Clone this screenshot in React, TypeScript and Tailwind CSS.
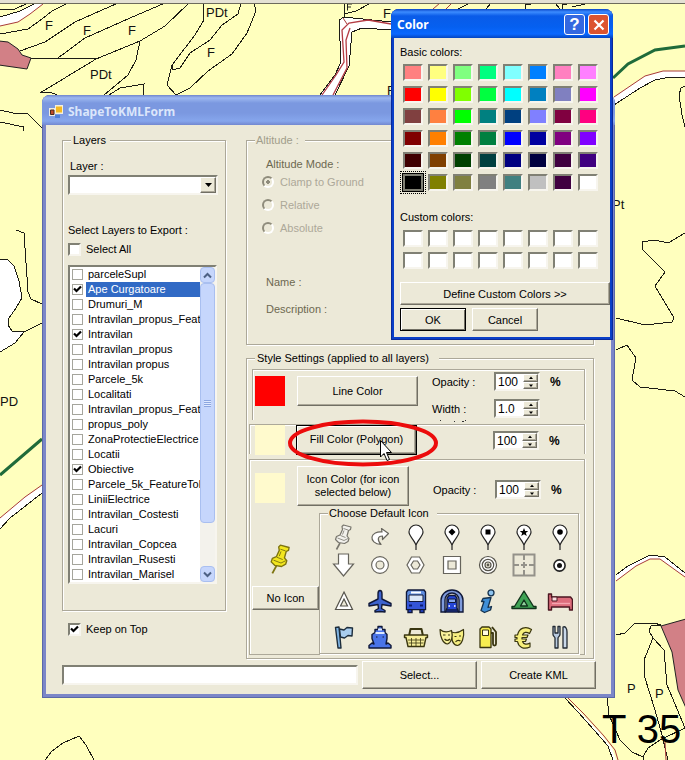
import React, { useState } from "react";
import type { ReactNode } from "react";

const RAISED =
  "bg-[#ece9d8] border border-t-white border-l-white border-r-[#716f64] border-b-[#716f64] shadow-[inset_-1px_-1px_0_#aca899]";
const SUNKEN =
  "bg-white border-2 border-t-[#808074] border-l-[#808074] border-r-[#f7f5ee] border-b-[#f7f5ee]";
const ETCHED = "border border-[#aca899] shadow-[1px_1px_0_#fff,inset_1px_1px_0_#fff]";

function MapLabel({ x, y, children }: { x: number; y: number; children: string }) {
  return (
    <text x={x} y={y} fontSize="13" fill="#111">
      {children}
    </text>
  );
}

function MapCanvas() {
  return (
    <svg
      className="absolute inset-0 h-full w-full font-['Liberation_Sans',sans-serif]"
      viewBox="0 0 685 760"
      preserveAspectRatio="xMinYMin slice"
      aria-hidden="true"
    >
      <rect width="685" height="760" fill="#ffffbe" />
      <g fill="#fff">
        <path d="M0 17 20 11 34 4H43L30 14 18 22 0 26Z" />
        <path d="M320 95 335 75 341 62 339 20 344 17 391 22V30L362 28 352 32 349 66 335 95Z" />
        <path d="M0 259 8 260 14 266 19 281 22 298 16 308 9 318 8 325 12 331 24 332 15 343 0 352Z" />
        <path d="M0 518 25 497 42 486V493L10 518 0 529Z" />
        <path d="M614 97 645 76 663 71H685V77H670L655 80 640 88 614 105Z" />
        <path d="M616 575 628 566 650 555 665 557 685 573V577L660 559H650L636 566 616 581Z" />
        <path d="M564 697 580 712 600 733 612 748 616 760H613L608 746 594 730 578 712Z" />
      </g>
      <g fill="#d28086" stroke="#222" strokeWidth="1">
        <path d="M-1 41 8 42 18 49 22 55 31 58 27 69-1 65Z" />
        <path d="M661 626 686 619V708L678 690 672 652Z" />
      </g>
      <g fill="none" stroke="#1c1c14" strokeWidth="1" shapeRendering="crispEdges">
        <path d="M0 10 15 9 28 3M0 17 20 11 34 4M0 34 28 29 42 19 52 11 68 3M20 51 45 42 75 22 118 3M58 58 85 38 130 18 165 3" />
        <path d="M40 93 96 59 140 41 165 26 189 3M30 58 96 59M140 41 136 60 128 75 110 90 104 95M40 93 50 92 57 95M109 95 120 88 144 84 143 95" />
        <path d="M203 3 204 20 195 35 172 65V70L180 68 190 53 210 40 222 25 238 14 241 3M172 65 167 85 176 95 190 88 208 71 232 54 247 33 256 11 254 3" />
        <path d="M320 95 335 75 341 62 339 20 344 17 391 22M391 30 362 28 352 32 349 66 335 95M344 17 345 3M344 14 356 11 371 3" />
        <path d="M0 110 13 113 28 114 42 128M0 122 24 127 23 131" />
        <path d="M16 230 24 233 28 292 31 299 42 304M0 259 8 260 14 266 19 281 22 298 16 308 9 318 8 325 12 331 24 332 42 323M24 332 15 343 0 352M0 529 10 518 42 493" />
        <path d="M45 760 52 751 63 743 79 736 86 745 94 760" />
        <path d="M614 105 640 88 655 80 670 77H685M685 86 681 88 679 95 682 115 685 127M458 9 470 3M486 9 491 3M555 3 560 9M572 7 585 4M525 4H531M525 4V9M562 4H567M562 4V9" />
        <path d="M685 233 668 243 655 240 642 242 643 250 665 272 655 286 674 318 672 322 645 325 616 318" />
        <path d="M616 350 627 345 636 358 632 380 640 387 675 391 685 397M616 575 628 566 650 555 665 557 685 573" />
        <path d="M616 635 625 633 634 624 654 623 661 625 651 626 649 631 653 638 644 660V675L655 710 662 735 668 760M653 638 664 650 667 685 685 728" />
        <path d="M607 697 609 715 620 740 632 752 643 757 648 748 660 740 685 728M564 697 578 712 594 730 608 746 613 760M643 757V760" />
      </g>
      <g fill="none" stroke="#a83a38" strokeWidth="1">
        <path d="M0 26 18 22 30 14 43 4M0 518 25 497 42 485M614 97 645 76 663 71H685M616 581 636 566 650 559H660L685 577M567 697 584 714 604 736 615 750 618 760M665 742 666 760" />
        <path d="M343 18 347 24M433 9 440 3M446 9 452 3" />
      </g>
      <g fill="none" stroke="#b43c44" strokeWidth="1.300">
        <path d="M322 95 336 75 344 62 342 30 349 23 368 20 391 24M333 95 347 68 346 40 350 28" />
      </g>
      <path d="M0 475 42 439M613 78 628 64 655 50 685 46" fill="none" stroke="#1f6b3a" strokeWidth="3" />
      <MapLabel x={45} y={30}>F</MapLabel>
      <MapLabel x={83} y={35}>F</MapLabel>
      <MapLabel x={128} y={35}>F</MapLabel>
      <MapLabel x={207} y={57}>F</MapLabel>
      <MapLabel x={90} y={79}>PDt</MapLabel>
      <MapLabel x={206} y={17}>PDt</MapLabel>
      <MapLabel x={383} y={18}>F</MapLabel>
      <MapLabel x={387} y={95}>F</MapLabel>
      <MapLabel x={0} y={406}>PD</MapLabel>
      <MapLabel x={612} y={209}>Pt</MapLabel>
      <MapLabel x={627} y={693}>P</MapLabel>
      <MapLabel x={655} y={698}>P</MapLabel>
      <text x="602" y="743" fontSize="40" fill="#000">T 35</text>
      <path d="M347.500 10.500V4H352M347.500 7H351" fill="none" stroke="#222" />
      <rect width="685" height="3" fill="#e4e1d4" />
      <rect y="3" width="685" height="1" fill="#6d6b5c" />
    </svg>
  );
}

function Tick() {
  return (
    <svg viewBox="0 0 9 9" className="pointer-events-none z-10 col-start-1 row-start-1 size-[9px]" aria-hidden="true">
      <path d="M1 3.5 3.5 6 8 1.5" fill="none" stroke="#000" strokeWidth="2.2" />
    </svg>
  );
}

function CheckBox({ label, start = false, flat = false }: { label: string; start?: boolean; flat?: boolean }) {
  const [on, setOn] = useState(start);
  return (
    <label className={flat ? "flex h-[15px] items-center" : "flex h-4 items-center gap-[5px]"}>
      <span className={flat ? "mr-[3px] ml-0.5 grid place-items-center" : "grid place-items-center"}>
        <input
          type="checkbox"
          checked={on}
          onChange={() => setOn(!on)}
          className={
            flat
              ? "col-start-1 row-start-1 size-[11px] appearance-none border border-[#a5a59c] bg-white"
              : "col-start-1 row-start-1 size-[13px] appearance-none border-2 border-t-[#808074] border-l-[#808074] border-r-[#f7f5ee] border-b-[#f7f5ee] bg-white"
          }
        />
        {on && <Tick />}
      </span>
      <span
        className={
          label === "Ape Curgatoare"
            ? "h-[15px] flex-1 bg-[#316ac5] pl-[2px] leading-[15px] whitespace-nowrap text-white"
            : flat
              ? "h-[15px] flex-1 pl-[2px] leading-[15px] whitespace-nowrap"
              : "leading-4"
        }
      >
        {label}
      </span>
    </label>
  );
}

function Group({ title, className, titleClass, children }: { title: string; className: string; titleClass: string; children: ReactNode }) {
  return (
    <fieldset className={`${ETCHED} ${className}`}>
      <legend className={`bg-[#ece9d8] leading-[14px] ${titleClass}`}>{title}</legend>
      {children}
    </fieldset>
  );
}

const LAYERS: [string, boolean][] = [
  ["parceleSupl", false],
  ["Ape Curgatoare", true],
  ["Drumuri_M", false],
  ["Intravilan_propus_Featu", false],
  ["Intravilan", true],
  ["Intravilan_propus", false],
  ["Intravilan propus", false],
  ["Parcele_5k", false],
  ["Localitati", false],
  ["Intravilan_propus_Featu", false],
  ["propus_poly", false],
  ["ZonaProtectieElectrice", false],
  ["Locatii", false],
  ["Obiective", true],
  ["Parcele_5k_FeatureTol", false],
  ["LiniiElectrice", false],
  ["Intravilan_Costesti", false],
  ["Lacuri", false],
  ["Intravilan_Copcea", false],
  ["Intravilan_Rusesti", false],
  ["Intravilan_Marisel", false],
];

function ScrollButton({ up }: { up: boolean }) {
  return (
    <button
      type="button"
      aria-label={up ? "Scroll up" : "Scroll down"}
      className="grid h-4 w-[15px] place-items-center rounded-sm border border-[#a9bff0] bg-[#c6d6fc]"
    >
      <svg viewBox="0 0 9 7" className="h-[7px] w-[9px]" aria-hidden="true">
        <path d={up ? "M1 5.5 4.5 2 8 5.5" : "M1 1.5 4.5 5 8 1.5"} fill="none" stroke="#4d6185" strokeWidth="2" />
      </svg>
    </button>
  );
}

function LayerList() {
  return (
    <div className={`mt-2 flex w-[149px] justify-between ${SUNKEN}`}>
      <div className="w-[130px] overflow-hidden">
        {LAYERS.map(([name, on], i) => (
          <CheckBox key={i} label={name} start={on} flat />
        ))}
      </div>
      <div className="flex flex-col bg-[#f3f2ec]">
        <ScrollButton up />
        <div className="grid h-[240px] place-items-center rounded-sm border border-[#a9bff0] bg-[#c6d6fc]">
          <span className="h-[7px] w-[7px] bg-[repeating-linear-gradient(#8ca6e0_0_1px,#dfe9ff_1px_2px)]" />
        </div>
        <div className="flex-1" />
        <ScrollButton up={false} />
      </div>
    </div>
  );
}

function Spinner({ label, value }: { label: string; value: string }) {
  return (
    <span className={`flex h-[19px] w-[46px] ${SUNKEN}`}>
      <input aria-label={label} defaultValue={value} className="w-full min-w-0 flex-1 pl-0.5 text-[12px] outline-none" />
      <span className="flex w-[15px] flex-none flex-col">
        {["M0 3 2 0.5 4 3Z", "M0 0.5 2 3 4 0.5Z"].map((d, i) => (
          <button
            key={i}
            type="button"
            aria-label={i === 0 ? `Increase ${label}` : `Decrease ${label}`}
            className={`grid flex-1 place-items-center ${RAISED}`}
          >
            <svg viewBox="0 0 4 3" className="h-[3px] w-1" aria-hidden="true">
              <path d={d} />
            </svg>
          </button>
        ))}
      </span>
    </span>
  );
}

function Percent() {
  return <span className="pl-2.5 text-[12px] font-bold">%</span>;
}

/* ---- placemark icons, each drawn on a 26 x 26 grid ---- */

function PinShape({ fill, edge }: { fill: string; edge: string }) {
  return (
    <g stroke={edge} strokeLinejoin="round">
      <path d="M9 19 5.500 25.500" strokeWidth="1.600" />
      <path d="M11 2.500 12.500 1 20 3 19.500 5.500 17.500 6.500 16 12 18 14.500 17 17.500 13.500 19.500 7.500 18.500 4.500 15.500 5.500 12.500 9 11 11.500 5.500Z" fill={fill} strokeWidth="1.200" />
      <path d="M12.500 4.500 17 6M9.500 11.500 14.500 13.500M6.500 14 13 16.500 17 14.500M13 6.500 11.500 10.500" fill="none" strokeWidth="0.800" />
    </g>
  );
}

function Balloon({ children }: { children?: ReactNode }) {
  return (
    <>
      <path d="M13 26V21.500C12.500 17 6 12.500 6 8a7 7 0 0 1 14 0C20 12.500 13.500 17 13 21.500" fill="#fff" stroke="#222" strokeWidth="1.200" />
      {children}
    </>
  );
}

const ICONS: [string, ReactNode][] = [
  ["White pushpin", <PinShape fill="#f2f1ec" edge="#77756c" />],
  [
    "Turn arrow",
    <path d="M14.500 4.500 21.500 9.500 15.500 15.500 15.500 12C10.500 12 10 16 14 20.500 7.500 20 4.500 16.500 5 13 5.500 9.500 10 7.500 15 8Z" fill="#fff" stroke="#66645c" strokeWidth="1.200" strokeLinejoin="round" />,
  ],
  ["Blank balloon", <Balloon />],
  ["Diamond balloon", <Balloon><path d="M13 4.500 16.500 8 13 11.500 9.500 8Z" /></Balloon>],
  ["Square balloon", <Balloon><path d="M10.500 5.500h5v5h-5z" /></Balloon>],
  ["Star balloon", <Balloon><path d="M13 4 14.200 7 17.200 7 14.800 9 15.800 12 13 10.200 10.200 12 11.200 9 8.800 7 11.800 7Z" /></Balloon>],
  ["Dot balloon", <Balloon><circle cx="13" cy="8" r="2.800" /></Balloon>],
  ["Down arrow", <path d="M7.500 2h10v10h5L12.500 24 2.500 12h5Z" fill="#fff" stroke="#66645c" strokeWidth="1.200" />],
  [
    "Circle",
    <g fill="none"><circle cx="13" cy="13" r="6.200" stroke="#66645c" strokeWidth="5.500" /><circle cx="13" cy="13" r="6.200" stroke="#fff" strokeWidth="3.300" /></g>,
  ],
  [
    "Polygon",
    <g fill="#fff" stroke="#66645c" strokeWidth="1.200"><path d="M8.500 5h8l4.500 8-4.500 8h-8L4 13Z" /><path d="M10.500 9h4l2.500 4-2.500 4h-4L8 13Z" fill="#ece9d8" /></g>,
  ],
  [
    "Square",
    <g fill="#fff" stroke="#66645c" strokeWidth="1.200"><path d="M4.500 4.500h17v17h-17z" /><path d="M9 9h8v8H9z" fill="#ece9d8" /></g>,
  ],
  [
    "Target",
    <g fill="#fff" stroke="#55534b" strokeWidth="1.200"><circle cx="13" cy="13" r="8.500" /><circle cx="13" cy="13" r="5.700" /><circle cx="13" cy="13" r="3" fill="#ece9d8" /><circle cx="13" cy="13" r="0.800" /></g>,
  ],
  [
    "Cross hairs",
    <g fill="none" stroke="#94928a" strokeWidth="2"><path d="M2.500 2.500h21v21h-21z" /><path d="M13 3v5M13 18v5M3 13h5M18 13h5M13 10v6M10 13h6" /></g>,
  ],
  [
    "Shaded dot",
    <g><circle cx="12.500" cy="13.500" r="5.600" fill="#fff" stroke="#222" strokeWidth="1.600" /><circle cx="12.500" cy="13.500" r="2.500" fill="#111" /></g>,
  ],
  [
    "Triangle",
    <g fill="#fff" stroke="#55534b" strokeWidth="1.200"><path d="M13 4 21.500 21.500H4.500Z" /><path d="M13 11 16.500 18H9.500Z" fill="#ece9d8" /></g>,
  ],
  [
    "Airport",
    <path d="M13 2.500c1.500 0 2 1.500 2 3.500v5l9 4.500v2.500l-9-1.500-.5 4 3.500 2v1.500L13 23.500 8 24v-1.500l3.500-2-.5-4-9 1.500v-2.500L11 11V6c0-2 .5-3.500 2-3.500Z" fill="#3d63cf" stroke="#101838" strokeWidth="1.400" strokeLinejoin="round" />,
  ],
  [
    "Bus",
    <g stroke="#101838" strokeWidth="1.400">
      <path d="M5 21h4v3.500H5zM17 21h4v3.500h-4z" fill="#2546d8" />
      <path d="M5 2h16l1.500 2v17.500h-19V4Z" fill="#5f8de0" />
      <path d="M4 13h18v8H4z" fill="#3455d8" stroke="none" />
      <path d="M6 7h14v6.500H6z" fill="#dce8f8" strokeWidth="1" />
      <path d="M8 4.500h10" stroke="#fff" strokeWidth="2" />
      <path d="M6 17.500h3M17 17.500h3" stroke="#0c1c70" strokeWidth="2" />
    </g>,
  ],
  [
    "Rail",
    <g stroke="#101838" strokeWidth="1.400">
      <path d="M2 24V12a11 10 0 0 1 22 0v12h-4V12a7 7 0 0 0-14 0v12Z" fill="#7f9bdc" />
      <path d="M8 20V10l2-2.500h6l2 2.500v10l1.500 4h-13Z" fill="#2546d8" />
      <path d="M9.500 11h7v3.500h-7z" fill="#86a6ee" strokeWidth="1" />
      <path d="M9.500 18h1.500M15 18h1.500" stroke="#fff" strokeWidth="1.500" />
      <path d="M8 22h10" />
    </g>,
  ],
  [
    "Information",
    <g fill="#3f8fd8" stroke="#14304c" strokeWidth="1.300" strokeLinejoin="round">
      <circle cx="16" cy="4.800" r="3" fill="#8ec4f0" />
      <path d="M8 10.500 16 9.500 13 19.500 16.500 18.500 15.500 22 9.500 24.500 6 22.500 9 13.500 6.500 13.500Z" />
    </g>,
  ],
  [
    "Campground",
    <g stroke="#11331b" strokeWidth="1.400" strokeLinejoin="round">
      <path d="M13 3 22.500 18.500H25V20.500H1V18.500H3.500Z" fill="#3fa455" />
      <path d="M13 12 16.500 18H9.500Z" fill="#8fd09c" />
    </g>,
  ],
  [
    "Lodging",
    <g stroke="#4a1620" strokeWidth="1.400" strokeLinejoin="round">
      <path d="M1.500 6h3v3h19l2 2.500V22h-3v-3H4.500v3h-3Z" fill="#dd6d7c" />
      <path d="M5 9h5v4H5z" fill="#fbdde0" strokeWidth="1" />
      <path d="M5 15.500h18" stroke="#f4a6b0" />
    </g>,
  ],
  [
    "Flag",
    <g stroke="#1d2d3c" strokeWidth="1.400" strokeLinejoin="round">
      <path d="M4.500 3.500 8 3 10 24H7Z" fill="#7fb4e4" />
      <path d="M8.500 5 13 6 16 3.500 21.500 4 21 12 17 11.500 13.500 14 9.500 13Z" fill="#a9cdee" />
    </g>,
  ],
  [
    "Ferry",
    <g stroke="#101838" strokeWidth="1.400" strokeLinejoin="round">
      <path d="M8 8.500V5.500h3V2.500h4v3h3v3l2 2v4L19 20l2-1 3 2.500V24H2v-2.500L5 19l2 1-2-5.500v-4Z" fill="#4a74e8" />
      <path d="M11 5.500h4M8.500 9h9" stroke="#dce8ff" strokeWidth="2" />
      <path d="M9 13h1.500M15.500 13H17" strokeWidth="1.200" />
    </g>,
  ],
  [
    "Market basket",
    <g stroke="#3a3610" strokeWidth="1.400" strokeLinejoin="round">
      <path d="M6 12 7.500 5h11L20 12" fill="none" strokeWidth="2" />
      <path d="M1.500 11h23v2.500h-1.500L21 22.500H5L3 13.500H1.500Z" fill="#f6ee9a" />
      <path d="M5 16h16M5.500 19h15M8.500 14v8M13 14v8M17.500 14v8" strokeWidth="0.800" />
    </g>,
  ],
  [
    "Theatre masks",
    <g stroke="#3a3610" strokeWidth="1.200" strokeLinejoin="round">
      <path d="M12.500 8C16 9.500 21 8 24.500 5.500 25.500 13 23 20.500 18.500 21.500 14.500 21 12 17 12.500 8Z" fill="#f6ee80" />
      <path d="M1 5.500C4 8 8.500 8.500 12.500 6.500 14 12 13 18 8.500 20 4 19.500 1 13 1 5.500Z" fill="#f9f29c" />
      <path d="M4 11h2.500M9 11h2M5.500 15c2 2 4 1.500 5.500 0M15.500 12.500h2M20 12h2M16.500 18c1.500-2 3.500-2 5-1" fill="none" />
    </g>,
  ],
  [
    "Gas station",
    <g stroke="#3a3610" strokeWidth="1.300" strokeLinejoin="round">
      <path d="M15 9h3v11c0 2 3 2 3 0V8L17 3" fill="none" strokeWidth="1.800" />
      <path d="M5 5 7 3h7l2 2v18.500H5Z" fill="#f8ee50" />
      <path d="M7.500 6h6v5.500h-6z" fill="#fffde0" strokeWidth="1" />
    </g>,
  ],
  [
    "Euro",
    <path d="M20.500 5.500 18.500 9.500C15.500 7.500 12.500 8 11.500 11h5.500l-1 2.500h-5v1.500h4.500l-1 2.500h-3c1 3 4.500 3.500 7.500 1.500V23C12.500 26 7.500 23 6.500 17.500H4V15h2v-1.500H4V11h2.500C8 4 14.500 1.500 20.500 5.500Z" fill="#f8f07c" stroke="#3a3610" strokeWidth="1.200" strokeLinejoin="round" />,
  ],
  [
    "Dining",
    <g stroke="#222a33" strokeWidth="1.300" strokeLinejoin="round">
      <path d="M6 2.500v8c0 1.500 2 2.500 2 3.500v10h3V14c0-1 2-2 2-3.500v-8h-2V9H8V2.500Z" fill="#b9cbe0" />
      <path d="M16 24V3c2.500-1 4 1.500 4 5v16Z" fill="#c9d8ea" />
    </g>,
  ],
];

function Pushpin() {
  return (
    <svg viewBox="0 0 26 26" className="ml-[14px] size-[30px]" aria-hidden="true">
      <PinShape fill="#f2e61e" edge="#7d7410" />
    </svg>
  );
}

function IconPicker() {
  return (
    <Group title="Choose Default Icon" className="w-[260px] pb-[2px]" titleClass="ml-2 pr-2 pl-px">
      <div className="mt-[3px] grid grid-cols-7 grid-rows-[28px_28px_44px_28px] place-items-center pl-[6px]">
        {ICONS.map(([name, art]) => (
          <button key={name} type="button" aria-label={name} className="size-[26px]">
            <svg viewBox="0 0 26 26" className="size-[26px]" aria-hidden="true">
              {art}
            </svg>
          </button>
        ))}
      </div>
    </Group>
  );
}

function StyleSettings() {
  const band = "border-t border-r border-l border-[#aca899] shadow-[inset_1px_1px_0_#fff,1px_0_0_#fff]";
  return (
    <Group title="Style Settings (applied to all layers)" className="mt-[6px] pr-[8px] pb-[3px] pl-[2px]" titleClass="ml-1.5 px-0.5 pr-2.5">
      <div className={`mt-1 ml-[3px] flex h-[51px] pl-[2px] ${band}`}>
        <span className="mt-1.5 size-[30px] bg-[#ff0000]" />
        <button type="button" className={`mt-1.5 ml-3 h-[30px] w-[121px] ${RAISED}`}>Line Color</button>
        <div className="mt-0.5 ml-[14px] grid grid-cols-[62px_46px_auto] grid-rows-[19px_19px] items-center gap-y-2">
          <span>Opacity :</span>
          <Spinner label="Line opacity" value="100" />
          <Percent />
          <span>Width :</span>
          <Spinner label="Line width" value="1.0" />
        </div>
      </div>
      <div className={`relative mt-1 flex h-[30px] pl-[5px] ${band}`}>
        <span className="size-[30px] bg-[#fffacd]" />
        <button type="button" className="ml-[11px] h-[30px] w-[121px] border border-black bg-[#ece9d8] pb-0.5 shadow-[inset_1px_1px_0_#fff,inset_-1px_-1px_0_#716f64,inset_-2px_-2px_0_#aca899]">
          Fill Color (Polygon)
        </button>
        <span className="mt-1.5 ml-[76px] flex h-[19px] items-center">
          <Spinner label="Fill opacity" value="100" />
          <Percent />
        </span>
        <svg viewBox="0 0 180 48" className="pointer-events-none absolute -top-[6px] left-[38px] h-12 w-[180px]" aria-hidden="true">
          <ellipse cx="75" cy="24" rx="73" ry="21.500" fill="none" stroke="#ec0c0c" strokeWidth="4" />
          <path d="M92.500 21.500V38L96 34.500 99 41.500 101.500 40.500 98.500 33.500H103.500Z" fill="#fff" stroke="#000" />
          <path d="M152 1.500h1M166 2.500h1M174 2.500h2M177 1.500h1" stroke="#333" />
        </svg>
      </div>
      <div className={`mt-[5px] border-b pr-[4px] pl-[2px] ${band}`}>
        <div className="flex items-start pt-1.5 pl-[3px]">
          <span className="mt-[7px] size-[30px] bg-[#fffacd]" />
          <button type="button" className={`ml-3 h-10 w-[112px] px-2 leading-[13px] ${RAISED}`}>
            Icon Color (for icon selected below)
          </button>
          <span className="mt-3.5 ml-6 flex h-[19px] items-center">
            <span className="w-[62px]">Opacity :</span>
            <Spinner label="Icon opacity" value="100" />
            <Percent />
          </span>
        </div>
        <div className="flex">
          <div className="w-[67px] pt-[38px]">
            <Pushpin />
            <button type="button" className={`mt-3 h-6 w-full ${RAISED}`}>No Icon</button>
          </div>
          <IconPicker />
        </div>
      </div>
    </Group>
  );
}

function Altitude() {
  return (
    <Group title="Altitude :" className="pb-7 pl-[19px] text-[#6c6850]" titleClass="-ml-[11px] pr-1.5 pl-px text-[#a19d8b]">
      <div className="mt-2.5 leading-[14px]">Altitude Mode :</div>
      <div className="mt-1 -ml-1 flex flex-col gap-[9px] text-[#aca899]">
        {["Clamp to Ground", "Relative", "Absolute"].map((name, i) => (
          <label key={name} className="flex h-[14px] items-center gap-1.5">
            <input
              type="radio"
              name="altitude"
              disabled
              defaultChecked={i === 0}
              className="size-3 appearance-none rounded-full border-2 border-t-[#8f8c7c] border-l-[#8f8c7c] border-r-white border-b-white bg-[#ece9d8] checked:bg-[radial-gradient(#8f8c7c_2px,#ece9d8_2px)]"
            />
            <span>{name}</span>
          </label>
        ))}
      </div>
      <div className="mt-10 leading-[14px]">Name :</div>
      <div className="mt-[13px] leading-[14px]">Description :</div>
    </Group>
  );
}

function ExportForm() {
  return (
    <section className="absolute top-[95px] left-[42px] w-[573px] rounded-t-lg bg-[#7b86c8] shadow-[inset_1px_1px_0_#5a68a8,inset_-1px_-1px_0_#5a68a8]">
      <header className="flex h-[30px] items-center gap-[5px] rounded-t-lg bg-[linear-gradient(#6f86cc_0,#9db8f0_3px,#7b98e0_8px,#7b98e0_18px,#86a6ec_26px,#7288d0)] px-[7px] pt-1">
        <svg viewBox="0 0 14 14" className="size-[14px]" aria-hidden="true">
          <path d="M6 0h8v9H6z" fill="#f4f0dc" />
          <path d="M7 1.500h6v6H7z" fill="#f5b921" />
          <path d="M0 3h6v8H0z" fill="#f0ece0" />
          <path d="M1.500 5h3.500v4.500H1.500z" fill="#c04a28" stroke="#4b2c20" />
          <path d="M6 10h5v3H6z" fill="#4f7fd8" />
        </svg>
        <h1 className="font-['Noto_Sans','Open_Sans',sans-serif] text-[12px] font-bold text-[#dbe6fb]">ShapeToKMLForm</h1>
      </header>
      <div className="mx-1 bg-[#ece9d8] pt-2 pr-[17px] pb-[5px] pl-4">
        <div className="flex gap-5">
          <div className="w-[164px]">
            <Group title="Layers" className="pb-[26px] pl-[5px]" titleClass="ml-[3px] pr-1 pl-0.5">
              <label htmlFor="layer" className="mt-3 block pl-0.5 leading-[14px]">Layer :</label>
              <span className="mt-0.5 grid w-[150px]">
                <select id="layer" className={`col-start-1 row-start-1 h-5 appearance-none ${SUNKEN}`} />
                <span className={`pointer-events-none col-start-1 row-start-1 mt-0.5 mr-0.5 grid h-4 w-4 place-items-center justify-self-end ${RAISED}`}>
                  <svg viewBox="0 0 7 4" className="h-1 w-[7px]" aria-hidden="true">
                    <path d="M0 0h7L3.500 4Z" />
                  </svg>
                </span>
              </span>
              <div className="mt-7 mb-1 leading-[14px]">Select Layers to Export :</div>
              <CheckBox label="Select All" />
              <LayerList />
            </Group>
            <div className="mt-2.5 pl-1.5">
              <CheckBox label="Keep on Top" start />
            </div>
          </div>
          <div className="flex-1">
            <Altitude />
            <StyleSettings />
          </div>
        </div>
        <div className="mt-0.5 -mr-0.5 flex h-7 items-center gap-1">
          <input aria-label="Output file" className={`h-5 min-w-0 flex-1 px-1 ${SUNKEN}`} />
          <button type="button" className={`h-7 w-[115px] ${RAISED}`}>Select...</button>
          <button type="button" className={`h-7 w-[115px] ${RAISED}`}>Create KML</button>
        </div>
      </div>
      <div className="h-1" />
    </section>
  );
}

const BASIC = [
  "#ff8080", "#ffff80", "#80ff80", "#00ff80", "#80ffff", "#0080ff", "#ff80c0", "#ff80ff",
  "#ff0000", "#ffff00", "#80ff00", "#00ff40", "#00ffff", "#0080c0", "#8080c0", "#ff00ff",
  "#804040", "#ff8040", "#00ff00", "#008080", "#004080", "#8080ff", "#800040", "#ff0080",
  "#800000", "#ff8000", "#008000", "#008040", "#0000ff", "#0000a0", "#800080", "#8000ff",
  "#400000", "#804000", "#004000", "#004040", "#000080", "#000040", "#400040", "#400080",
  "#000000", "#808000", "#808040", "#808080", "#408080", "#c0c0c0", "#400040", "#ffffff",
];

function Swatches({ colors, prefix }: { colors: string[]; prefix: string }) {
  return (
    <div className="grid grid-cols-[repeat(8,20px)] gap-[5px] pl-[3px]">
      {colors.map((c, i) => (
        <button
          key={i}
          type="button"
          aria-label={`${prefix} ${i + 1}`}
          style={{ backgroundColor: c }}
          className={
            c === "#000000"
              ? "h-[17px] border-2 border-[#808074] ring-1 ring-black outline-1 outline-offset-2 outline-dotted outline-black"
              : "h-[17px] border-2 border-t-[#808074] border-l-[#808074] border-r-[#f7f5ee] border-b-[#f7f5ee]"
          }
        />
      ))}
    </div>
  );
}

function ColorDialog() {
  return (
    <section className="absolute top-[9px] left-[391px] w-[222px] rounded-t-lg bg-[#0a3fc8] shadow-[inset_1px_0_0_#0a2a9a,inset_-1px_-1px_0_#0a2a9a]">
      <header className="flex h-[29px] items-center gap-[3px] rounded-t-lg bg-[linear-gradient(#0a45c8_0,#3c8cff_3px,#0a5be8_7px,#0560f0_18px,#0a68ff_25px,#0445c0)] pr-1 pl-1.5">
        <h2 className="flex-1 pt-0.5 font-['Noto_Sans','Open_Sans',sans-serif] text-[12px] font-bold text-white">Color</h2>
        <button type="button" aria-label="Help" className="mt-0.5 grid size-[21px] place-items-center rounded-[3px] border border-white bg-[#3468e0] text-[17px] leading-none font-bold text-white">
          ?
        </button>
        <button type="button" aria-label="Close" className="mt-0.5 grid size-[21px] place-items-center rounded-[3px] border border-white bg-[#dc5430]">
          <svg viewBox="0 0 12 12" className="size-3" aria-hidden="true">
            <path d="M1.500 1.500 10.500 10.500M10.500 1.500 1.500 10.500" stroke="#fff" strokeWidth="2.200" />
          </svg>
        </button>
      </header>
      <div className="mx-[3px] bg-[#ece9d8] pt-[7px] pb-1.5 pl-1.5">
        <h3 className="mb-[5px] leading-[14px]">Basic colors:</h3>
        <Swatches colors={BASIC} prefix="Basic color" />
        <h3 className="mt-[19px] mb-1.5 leading-[14px]">Custom colors:</h3>
        <Swatches colors={Array(16).fill("#ffffff")} prefix="Custom color" />
        <button type="button" className={`mt-[13px] h-[23px] w-full ${RAISED}`}>Define Custom Colors &gt;&gt;</button>
        <div className="mt-[3px] flex gap-1.5">
          <button type="button" className="h-[23px] w-[66px] border border-black bg-[#ece9d8] shadow-[inset_1px_1px_0_#fff,inset_-1px_-1px_0_#716f64]">OK</button>
          <button type="button" className={`h-[23px] w-[66px] ${RAISED}`}>Cancel</button>
        </div>
      </div>
      <div className="h-[3px]" />
    </section>
  );
}

export default function App() {
  return (
    <main className="relative min-h-screen overflow-hidden bg-[#ffffbe] font-['Liberation_Sans',Arial,sans-serif] text-[11px] leading-[14px] text-black">
      <MapCanvas />
      <ExportForm />
      <ColorDialog />
    </main>
  );
}
